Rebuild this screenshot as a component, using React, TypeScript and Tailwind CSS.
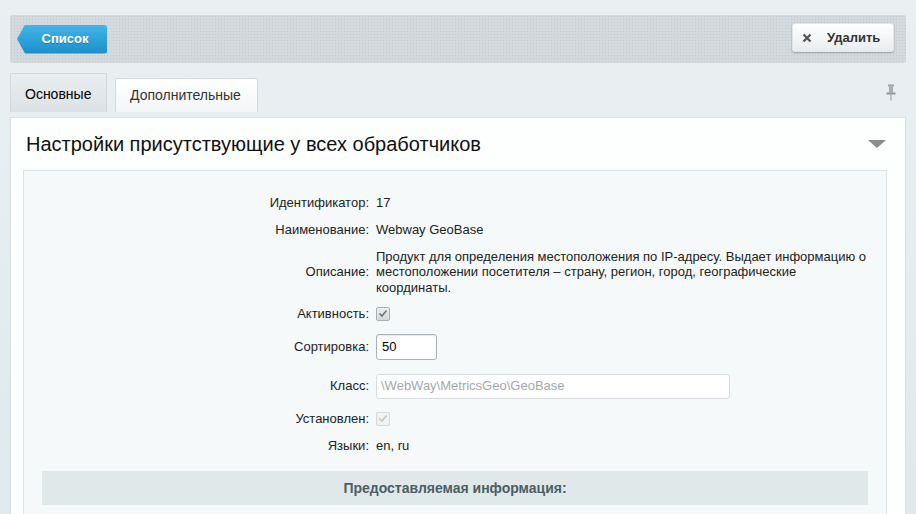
import React from "react";

const font = { fontFamily: '"Liberation Sans", Arial, sans-serif' };

function Row({ label, h, children }: { label: string; h: string; children: React.ReactNode }) {
  return (
    <div className={`grid grid-cols-[352px_1fr] ${h}`}>
      <div className="flex items-center justify-end pr-[7px] text-[13px] text-[#222]">{label}</div>
      <div className="flex items-center text-[13px] text-[#222]">{children}</div>
    </div>
  );
}

function Check({ disabled = false }: { disabled?: boolean }) {
  return (
    <div
      className={`w-[14px] h-[14px] rounded-[2px] border flex items-center justify-center ${
        disabled ? "border-[#d6dadc] bg-[#f0f2f3]" : "border-[#a9b0b3] bg-gradient-to-b from-[#eef0f1] to-[#d4d8da]"
      }`}
    >
      <svg width="10" height="9" viewBox="0 0 10 9">
        <path d="M1.5 4.5 L4 7 L8.5 1.5" fill="none" stroke={disabled ? "#c3c8ca" : "#6d7477"} strokeWidth="1.6" />
      </svg>
    </div>
  );
}

export default function App() {
  return (
    <div style={font} className="w-[916px] h-[514px] overflow-hidden bg-gradient-to-b from-[#eaf0f2] to-[#e1e9ec] relative">
      <div className="pt-[15px] px-[10px]">
        {/* toolbar */}
        <div className="h-[48px] w-[896px] rounded-[3px] bg-[#d3d9dc] bg-[radial-gradient(#c3cacd_1px,transparent_1px)] bg-[length:3px_3px] flex items-center justify-between pl-[7px] pr-[12px]">
          <div className="relative h-[29px] flex items-center">
            <div className="h-[29px] w-[90px] bg-gradient-to-b from-[#42b4e8] to-[#1a8fcb] rounded-r-[3px] [clip-path:polygon(8px_0,100%_0,100%_100%,8px_100%,0_50%)] flex items-center justify-center pl-[6px] shadow">
              <span className="text-white font-bold text-[13px] [text-shadow:0_1px_0_rgba(0,0,0,0.25)]">Список</span>
            </div>
          </div>
          <div className="h-[29px] w-[102px] -mt-[3px] rounded-[3px] bg-gradient-to-b from-white to-[#e9edef] border border-[#e2e6e8] shadow-[0_1px_2px_rgba(0,0,0,0.25)] flex items-center pl-[9px] gap-[15px]">
            <svg width="10" height="10" viewBox="0 0 10 10">
              <path d="M1.5 1.5 L8.5 8.5 M8.5 1.5 L1.5 8.5" stroke="#555" strokeWidth="2.3" />
            </svg>
            <span className="text-[13px] font-bold text-[#333]">Удалить</span>
          </div>
        </div>

        {/* tabs */}
        <div className="mt-[10px] flex items-end h-[39px] relative">
          <div className="h-[39px] w-[97px] bg-gradient-to-b from-[#e9eef0] to-[#dbe2e5] border border-[#d3dadd] border-b-0 rounded-t-[2px] flex items-center pl-[14px] pt-[2px] text-[14px] text-black">
            Основные
          </div>
          <div className="ml-[8px] h-[34px] w-[143px] bg-gradient-to-b from-white to-[#f3f6f7] border border-[#d3dadd] border-b-0 rounded-t-[2px] flex items-center pl-[14px] text-[14px] text-[#333]">
            Дополнительные
          </div>
          <div className="absolute right-[10px] top-[11px]">
            <svg width="10" height="17" viewBox="0 0 10 17">
              <rect x="2" y="0.5" width="6" height="2" fill="#9aa2a6" />
              <rect x="3" y="2.5" width="4" height="6" fill="#a7aeb2" />
              <rect x="0.5" y="8.5" width="9" height="2" fill="#8e979b" />
              <rect x="4.5" y="10.5" width="1" height="6" fill="#8e979b" />
            </svg>
          </div>
        </div>

        {/* panel */}
        <div className="mt-[5px] w-[896px] h-[400px] bg-[#fdfefe] border-t border-[#c9d1d4] border-x border-[#d9e0e3]">
          <div className="h-[52px] flex items-center justify-between pl-[15px] pr-[19px]">
            <div className="text-[20px] text-[#111]">Настройки присутствующие у всех обработчиков</div>
            <svg width="18" height="8" viewBox="0 0 18 8">
              <path d="M0 0 L18 0 L9 8 Z" fill="#8a8d8f" />
            </svg>
          </div>
          <div className="ml-[12px] w-[864px] h-[360px] bg-[#f5f9fa] border-t border-x border-[#dde4e7] pt-[18px]">
            <Row label="Идентификатор:" h="h-[27px]">17</Row>
            <Row label="Наименование:" h="h-[27px]">Webway GeoBase</Row>
            <Row label="Описание:" h="h-[58px]">
              <div className="leading-[15.5px] w-[493px]">
                Продукт для определения местоположения по IP-адресу. Выдает информацию о местоположении посетителя – страну, регион, город, географические координаты.
              </div>
            </Row>
            <Row label="Активность:" h="h-[25px]">
              <Check />
            </Row>
            <Row label="Сортировка:" h="h-[41px]">
              <div className="w-[61px] h-[26px] bg-white border border-[#a9b3b7] rounded-[3px] shadow-[inset_0_1px_1px_rgba(0,0,0,0.08)] flex items-center pl-[5px] text-[13px] text-black">
                50
              </div>
            </Row>
            <Row label="Класс:" h="h-[38px]">
              <div className="w-[354px] h-[25px] bg-white border border-[#d6dcdf] rounded-[3px] flex items-center pl-[4px] text-[13px] text-[#a3a8ab]">
                \WebWay\MetricsGeo\GeoBase
              </div>
            </Row>
            <Row label="Установлен:" h="h-[27px]">
              <Check disabled />
            </Row>
            <Row label="Языки:" h="h-[27px]">en, ru</Row>
            <div className="mt-[12px] mx-[18px] h-[34px] bg-[#e0e8ea] flex items-center justify-center text-[14px] font-bold text-[#4b5e63]">
              Предоставляемая информация:
            </div>
          </div>
        </div>
      </div>
    </div>
  );
}
